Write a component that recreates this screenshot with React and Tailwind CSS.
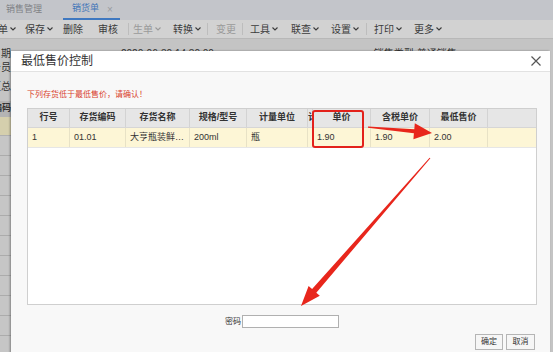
import React from "react";

const FONT = { fontFamily: '"Liberation Sans", "Noto Sans CJK SC", sans-serif' };

function Chevron({ gray }) {
  return (
    <svg width="6" height="4" viewBox="0 0 6 4" className="ml-[2px]">
      <path d="M0.5 0.5 L3 3 L5.5 0.5" fill="none" stroke={gray ? "#9a9a9a" : "#3b3b3b"} strokeWidth="1.1" />
    </svg>
  );
}

const tools = [
  { t: "单", ch: true, w: "w-[27px] -ml-[2px]" },
  { t: "保存", ch: true, w: "w-[38px]" },
  { t: "删除", w: "w-[35px]" },
  { t: "审核", w: "w-[30px]" },
  { sep: true, w: "w-[5px]" },
  { t: "生单", ch: true, gray: true, w: "w-[40px]" },
  { t: "转换", ch: true, w: "w-[34px]" },
  { sep: true, w: "w-[9px]" },
  { t: "变更", gray: true, w: "w-[26px]" },
  { sep: true, w: "w-[8px]" },
  { t: "工具", ch: true, w: "w-[41px]" },
  { t: "联查", ch: true, w: "w-[40px]" },
  { t: "设置", ch: true, w: "w-[35px]" },
  { sep: true, w: "w-[8px]" },
  { t: "打印", ch: true, w: "w-[40px]" },
  { t: "更多", ch: true, w: "w-[40px]" },
];

const cols = [
  { h: "行号", d: "1", w: "w-[42px]" },
  { h: "存货编码", d: "01.01", w: "w-[56px]" },
  { h: "存货名称", d: "大亨瓶装鲜榨果汁", w: "w-[64px]" },
  { h: "规格/型号", d: "200ml", w: "w-[57px]" },
  { h: "计量单位", d: "瓶", w: "w-[61px]" },
  { h: "计", d: "", w: "w-[5px]", hidden: true },
  { h: "单价", d: "1.90", w: "w-[58px]" },
  { h: "含税单价", d: "1.90", w: "w-[59px]" },
  { h: "最低售价", d: "2.00", w: "w-[58px]" },
];

export default function App() {
  return (
    <div className="relative w-[553px] h-[352px] overflow-hidden bg-[#c4c4c4]" style={FONT}>
      {/* tab bar */}
      <div className="h-[20px] bg-[#c3c5ca] flex items-stretch text-[9px]">
        <div className="w-[63px] pl-[6px] flex items-center text-[#7f8185]">销售管理</div>
        <div className="w-[57px] pl-[9px] flex items-center border-b-2 border-[#3f78c0] text-[#3f74b8]">
          <span>销货单</span>
          <span className="ml-[8px] text-[#9a9ca0] text-[10px]">×</span>
        </div>
      </div>
      {/* toolbar */}
      <div className="h-[19px] bg-[#d2d2d2] border-b border-[#b8b8b8] flex items-center text-[10px] text-[#3b3b3b]">
        {tools.map((it, i) =>
          it.sep ? (
            <div key={i} className={`${it.w} h-[12px] flex`}>
              <div className="w-px h-full bg-[#bdbdbd]" />
            </div>
          ) : (
            <div key={i} className={`${it.w} flex items-center shrink-0 ${it.gray ? "text-[#9a9a9a]" : ""}`}>
              <span>{it.t}</span>
              {it.ch && <Chevron gray={it.gray} />}
            </div>
          )
        )}
      </div>
      {/* underlying page content */}
      <div className="flex flex-col text-[10px] text-[#333]">
        <div className="h-[19px] pt-[7px] flex items-start">
          <div className="w-[11px] flex justify-end overflow-hidden whitespace-nowrap">日期</div>
          <div className="ml-[110px] whitespace-nowrap">2020-06-30 14:30:00</div>
          <div className="ml-[160px] whitespace-nowrap">销售类型 普通销售</div>
        </div>
        <div className="h-[19px] flex items-center">
          <div className="w-[11px] flex justify-end overflow-hidden whitespace-nowrap">业务员</div>
        </div>
        <div className="h-[19px] flex items-center">
          <div className="w-[11px] flex justify-end overflow-hidden whitespace-nowrap">汇总</div>
        </div>
        <div className="h-[5px]" />
        <div className="h-[16px] w-[11px] bg-[#b4b4b4] flex items-center justify-end overflow-hidden whitespace-nowrap font-bold text-[9px]">编码</div>
        <div className="h-[19px] w-[11px] bg-[#d5cfad] border-b border-[#b0b0b0]" />
        {[0, 1, 2, 3, 4, 5, 6, 7, 8, 9, 10].map((i) => (
          <div key={i} className="h-[20px] w-[11px] bg-[#c6c6c6] border-b border-[#acacac]" />
        ))}
      </div>

      {/* modal */}
      <div className="absolute left-[11px] top-[51px] w-[539px] h-[310px] bg-[#f8f8f8] flex flex-col shadow-[-1px_0_2px_rgba(0,0,0,0.35)]">
        <div className="h-[21px] bg-white border-b border-[#e2e2e2] flex items-center justify-between pl-[10px] pr-[9px]">
          <span className="text-[12px] text-[#333]">最低售价控制</span>
          <svg width="10" height="10" viewBox="0 0 10 10">
            <path d="M0.5 0.5 L9.5 9.5 M9.5 0.5 L0.5 9.5" stroke="#555" strokeWidth="1.2" />
          </svg>
        </div>
        <div className="flex flex-col pl-[16px] pr-[13px]">
          <div className="pt-[18px] h-[28px] text-[8px] leading-[10px] text-[#d8432e]">下列存货低于最低售价，请确认！</div>
          <div className="mt-[8px] h-[197px] border border-[#cfcfcf] bg-white">
            <div className="flex h-[19px] bg-[#e6e6e6] border-b border-[#d6d6d6] text-[9px] font-bold text-[#333]">
              {cols.map((c, i) => (
                <div
                  key={i}
                  className={`${c.w} shrink-0 h-full border-r border-[#d3d3d3] flex items-center overflow-hidden whitespace-nowrap ${c.hidden ? "justify-start" : "justify-center"}`}
                >
                  {c.h}
                </div>
              ))}
            </div>
            <div className="flex h-[20px] bg-[#fdf6d6] border-b border-[#e6e6e6] text-[9px] text-[#333]">
              {cols.map((c, i) => (
                <div
                  key={i}
                  className={`${c.w} shrink-0 h-full border-r border-[#e8e2c6] flex items-center pl-[4px] overflow-hidden`}
                >
                  <span className="block min-w-0 w-full overflow-hidden text-ellipsis whitespace-nowrap">{c.d}</span>
                </div>
              ))}
            </div>
          </div>
          <div className="mt-[10px] flex justify-center items-center text-[8px] text-[#333]">
            <span className="mr-[1px]">密码</span>
            <div className="w-[97px] h-[13px] bg-white border border-[#b0b0b0]" />
          </div>
          <div className="mt-[6px] flex justify-end gap-[3px] pr-[2px] text-[8px] text-[#333]">
            <div className="w-[28px] h-[16px] border border-[#b5b5b5] bg-[#f6f6f6] flex items-center justify-center">确定</div>
            <div className="w-[29px] h-[16px] border border-[#b5b5b5] bg-[#f6f6f6] flex items-center justify-center">取消</div>
          </div>
        </div>
      </div>

      {/* annotations */}
      <svg className="absolute left-0 top-0 pointer-events-none" width="553" height="352" viewBox="0 0 553 352">
        <rect x="313" y="111" width="50" height="36" rx="2" fill="none" stroke="#e3211b" strokeWidth="2" />
        <polygon
          fill="#e8261c"
          points="368,126.5 414.3,129.3 414.8,123.3 432,133 413.4,139.3 413.9,133.3 368,127.8"
        />
        <polygon
          fill="#e8261c"
          points="430.4,158.3 316.3,292.7 319.8,295.8 301,306 308.6,286.1 312.1,289.1 429.6,157.7"
        />
      </svg>
    </div>
  );
}
